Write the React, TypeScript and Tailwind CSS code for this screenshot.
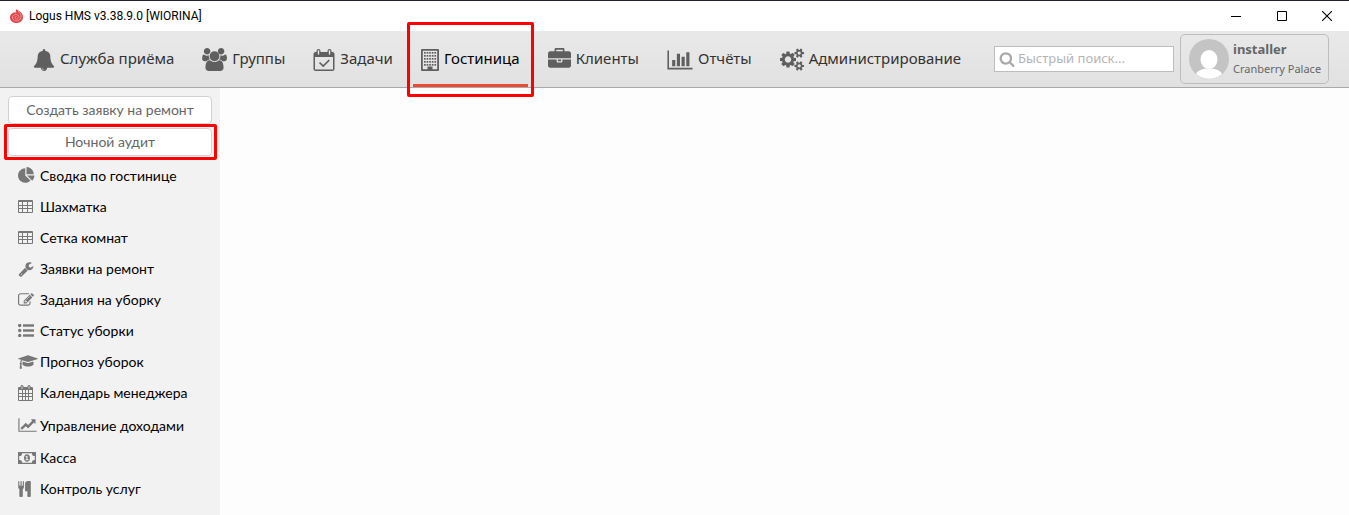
import type { ReactNode } from "react";

type IconProps = { box: string; className: string; children: ReactNode };

function Icon({ box, className, children }: IconProps) {
  return (
    <svg viewBox={box} className={className} fill="currentColor" aria-hidden="true">
      {children}
    </svg>
  );
}

const BellIcon = () => (
  <Icon box="0 0 1792 1792" className="h-[22px] w-[22px]">
    <path d="M912 1696q0-16-16-16-59 0-101.5-42.5t-42.5-101.5q0-16-16-16t-16 16q0 73 51.5 124.5t124.5 51.5q16 0 16-16zm816-288q0 52-38 90t-90 38h-448q0 106-75 181t-181 75-181-75-75-181h-448q-52 0-90-38t-38-90q50-42 91-88t85-119.5 74.5-158.5 50-206 19.5-260q0-152 117-282.5t307-158.5q-8-19-8-39 0-40 28-68t68-28 68 28 28 68q0 20-8 39 190 28 307 158.5t117 282.5q0 139 19.5 260t50 206 74.5 158.5 85 119.5 91 88z" />
  </Icon>
);

const UsersIcon = () => (
  <Icon box="-64 0 1920 1792" className="h-[23px] w-[25px]">
    <path d="M529 896q-162 5-265 128h-134q-82 0-138-40.5t-56-118.5q0-353 124-353 6 0 43.500 21t97.500 42.500 119 21.500q67 0 133-23-5 37-5 66 0 159 93 256zm1071 637q0 120-73 189.500t-194 69.500h-874q-121 0-194-69.500t-73-189.500q0-53 3.500-103.500t14-109 26.500-108.500 43-97.500 62-81 85.500-53.500 111.500-20q10 0 43 21.500t73 48 107 48 135 21.500 135-21.500 107-48 73-48 43-21.500q61 0 111.500 20t85.500 53.500 62 81 43 97.500 26.500 108.500 14 109 3.500 103.500zm-1024-1277q0 106-75 181t-181 75-181-75-75-181 75-181 181-75 181 75 75 181zm704 384q0 159-112.500 271.500t-271.500 112.500-271.500-112.500-112.500-271.500 112.500-271.500 271.500-112.500 271.500 112.500 112.500 271.500zm576 225q0 78-56 118.500t-138 40.500h-134q-103-123-265-128 93-97 93-256 0-29-5-66 66 23 133 23 59 0 119-21.500t97.500-42.500 43.500-21q124 0 124 353zm-192-609q0 106-75 181t-181 75-181-75-75-181 75-181 181-75 181 75 75 181z" />
  </Icon>
);

const CalendarCheckIcon = () => (
  <Icon box="0 0 21 22" className="h-[22px] w-[22px]">
    <path fillRule="evenodd" d="M2 3H3V2a2 2 0 0 1 4 0V3H14V2a2 2 0 0 1 4 0V3H19a2 2 0 0 1 2 2V20a2 2 0 0 1-2 2H2a2 2 0 0 1-2-2V5a2 2 0 0 1 2-2ZM1.500 8V20.500H19.500V8ZM4.300 1.800V5a.7.7 0 0 0 1.400 0V1.800a.7.7 0 0 0-1.400 0ZM15.300 1.800V5a.7.7 0 0 0 1.400 0V1.800a.7.7 0 0 0-1.400 0Z" />
    <path d="M6 13.500L9.700 17L15.800 11" fill="none" stroke="currentColor" strokeWidth="1.700" />
  </Icon>
);

const BuildingIcon = () => (
  <Icon box="0 0 18 22" className="h-[22px] w-[18px]">
    <path fillRule="evenodd" d="M1 0H17a1 1 0 0 1 1 1V21a1 1 0 0 1-1 1H1a1 1 0 0 1-1-1V1a1 1 0 0 1 1-1ZM1.800 1.800V20.200H6.500V17.500H11.500V20.200H16.200V1.800Z" />
    {[3, 6, 9, 12, 15].map((y) =>
      [3, 5.6, 8.2, 10.8, 13.4].map((x) => <rect key={`${x}-${y}`} x={x} y={y} width="1.700" height="1.700" />),
    )}
  </Icon>
);

const BriefcaseIcon = () => (
  <Icon box="0 0 1792 1792" className="h-[23px] w-[23px]">
    <path d="M640 256h512v-128h-512v128zm1152 640v480q0 66-47 113t-113 47h-1472q-66 0-113-47t-47-113v-480h672v160q0 26 19 45t45 19h320q26 0 45-19t19-45v-160h672zm-768 0v128h-256v-128h256zm768-480v384h-1792v-384q0-66 47-113t113-47h352v-160q0-40 28-68t68-28h576q40 0 68 28t28 68v160h352q66 0 113 47t47 113z" />
  </Icon>
);

const ChartIcon = () => (
  <Icon box="0 0 2048 1792" className="h-[22px] w-[26px]">
    <path d="M640 896v512h-256v-512h256zm384-512v1024h-256v-1024h256zm1024 1152v128h-2048v-1536h128v1408h1920zm-640-896v768h-256v-768h256zm384-384v1152h-256v-1152h256z" />
  </Icon>
);

const CogsIcon = () => (
  <Icon box="0 0 1920 1792" className="h-[23px] w-[24px]">
    <path d="M896 896q0-106-75-181t-181-75-181 75-75 181 75 181 181 75 181-75 75-181zm768 512q0-52-38-90t-90-38-90 38-38 90q0 53 37.500 90.500t90.500 37.500 90.500-37.500 37.500-90.500zm0-1024q0-52-38-90t-90-38-90 38-38 90q0 53 37.500 90.500t90.500 37.500 90.500-37.500 37.500-90.500zm-384 421v185q0 10-7 19.500t-16 10.500l-155 24q-11 35-32 76 34 48 90 115 7 11 7 20 0 12-7 19-23 30-82.500 89.500t-78.500 59.500q-11 0-21-7l-115-90q-37 19-77 31-11 108-23 155-7 24-30 24h-186q-11 0-20-7.500t-10-17.500l-23-153q-34-10-75-31l-118 89q-7 7-20 7-11 0-21-8-144-133-144-160 0-9 7-19 10-14 41-53t47-61q-23-44-35-82l-152-24q-10-1-17-9.500t-7-19.500v-185q0-10 7-19.500t16-10.500l155-24q11-35 32-76-34-48-90-115-7-11-7-20 0-12 7-20 22-30 82-89t79-59q11 0 21 7l115 90q34-18 77-32 11-108 23-154 7-24 30-24h186q11 0 20 7.500t10 17.500l23 153q34 10 75 31l118-89q8-7 20-7 11 0 21 8 144 133 144 160 0 8-7 19-12 16-42 54t-45 60q23 48 34 82l152 23q10 2 17 10.500t7 19.500zm640 533v140q0 16-149 31-12 27-30 52 51 113 51 138 0 4-4 7-122 71-124 71-8 0-46-47t-52-68q-20 2-30 2t-30-2q-14 21-52 68t-46 47q-2 0-124-71-4-3-4-7 0-25 51-138-18-25-30-52-149-15-149-31v-140q0-16 149-31 13-29 30-52-51-113-51-138 0-4 4-7 4-2 35-20t59-34 30-16q8 0 46 46.500t52 67.500q20-2 30-2t30 2q51-71 92-112l6-2q4 0 124 70 4 3 4 7 0 25-51 138 17 23 30 52 149 15 149 31zm0-1024v140q0 16-149 31-12 27-30 52 51 113 51 138 0 4-4 7-122 71-124 71-8 0-46-47t-52-68q-20 2-30 2t-30-2q-14 21-52 68t-46 47q-2 0-124-71-4-3-4-7 0-25 51-138-18-25-30-52-149-15-149-31v-140q0-16 149-31 13-29 30-52-51-113-51-138 0-4 4-7 4-2 35-20t59-34 30-16q8 0 46 46.500t52 67.500q20-2 30-2t30 2q51-71 92-112l6-2q4 0 124 70 4 3 4 7 0 25-51 138 17 23 30 52 149 15 149 31z" />
  </Icon>
);

const SearchIcon = () => (
  <Icon box="0 0 1792 1792" className="h-4 w-4 shrink-0">
    <path d="M1216 832q0-185-131.500-316.500t-316.500-131.500-316.500 131.500-131.500 316.500 131.500 316.500 316.500 131.500 316.500-131.500 131.500-316.500zm512 832q0 52-38 90t-90 38q-54 0-90-38l-343-342q-179 124-399 124-143 0-273.500-55.500t-225-150-150-225-55.500-273.500 55.500-273.500 150-225 225-150 273.500-55.500 273.500 55.500 225 150 150 225 55.500 273.500q0 220-124 399l343 343q37 37 37 90z" />
  </Icon>
);

const PieIcon = () => (
  <Icon box="0 0 1792 1792" className="h-[17px] w-[17px]">
    <path d="M768 890l546 546q-106 108-247.500 168t-298.500 60q-209 0-385.500-103t-279.500-279.500-103-385.500 103-385.500 279.500-279.500 385.500-103v762zm187 6h773q0 157-60 298.500t-168 247.500zm709-128h-768v-768q209 0 385.500 103t279.500 279.500 103 385.500z" />
  </Icon>
);

const TableIcon = () => (
  <Icon box="0 0 15 13" className="h-[13px] w-[15px]">
    <path fillRule="evenodd" d="M1 0H14a1 1 0 0 1 1 1V12a1 1 0 0 1-1 1H1a1 1 0 0 1-1-1V1a1 1 0 0 1 1-1ZM1 2V5H4V2ZM5 2V5H9V2ZM10 2V5H14V2ZM1 6V8H4V6ZM5 6V8H9V6ZM10 6V8H14V6ZM1 9V12H4V9ZM5 9V12H9V9ZM10 9V12H14V9Z" />
  </Icon>
);

const WrenchIcon = () => (
  <Icon box="0 0 1792 1792" className="h-4 w-4">
    <path d="M448 1472q0-26-19-45t-45-19-45 19-19 45 19 45 45 19 45-19 19-45zm644-420l-682 682q-37 37-90 37-52 0-91-37l-106-108q-38-36-38-90 0-53 38-91l681-681q39 98 114.500 173.500t173.500 114.500zm634-435q0 39-23 106-47 134-164.500 217.500t-258.500 83.500q-185 0-316.500-131.500t-131.500-316.500 131.500-316.500 316.500-131.500q58 0 121.500 16.500t107.500 46.500q16 11 16 28t-16 28l-293 169v224l193 107q5-3 79-48.500t135.500-81 70.500-35.500q15 0 23.500 10t8.500 25z" />
  </Icon>
);

const EditIcon = () => (
  <Icon box="0 0 1792 1792" className="h-4 w-4">
    <path d="M888 1184l116-116-152-152-116 116v56h96v96h56zm440-720q-16-16-33 1l-350 350q-17 17-1 33t33-1l350-350q17-17 1-33zm80 594v190q0 119-84.500 203.500t-203.500 84.500h-832q-119 0-203.500-84.500t-84.500-203.500v-832q0-119 84.500-203.500t203.500-84.500h832q63 0 117 25 15 7 18 23 3 17-9 29l-49 49q-14 14-32 8-23-6-45-6h-832q-66 0-113 47t-47 113v832q0 66 47 113t113 47h832q66 0 113-47t47-113v-126q0-13 9-22l64-64q15-15 35-7t20 29zm-96-738l288 288-672 672h-288v-288zm444 132l-92 92-288-288 92-92q28-28 68-28t68 28l152 152q28 28 28 68t-28 68z" />
  </Icon>
);

const ListIcon = () => (
  <Icon box="0 0 16 13" className="h-[13px] w-4">
    {[1.5, 6.5, 11.5].map((y) => (
      <g key={y}>
        <circle cx="1.700" cy={y} r="1.700" />
        <rect x="5" y={y - 1.2} width="11" height="2.400" />
      </g>
    ))}
  </Icon>
);

const CapIcon = () => (
  <Icon box="0 0 2304 1792" className="h-4 w-5">
    <path d="M1774 836l18 316q4 69-82 128t-235 93.500-323 34.500-323-34.500-235-93.500-82-128l18-316 574 181q22 7 48 7t48-7zm530-324q0 23-22 31l-1120 352q-4 1-10 1t-10-1l-652-206q-43 34-71 111.500t-34 178.500q63 36 63 109 0 69-58 107l58 433q2 14-8 25-9 11-24 11h-192q-15 0-24-11-10-11-8-25l58-433q-58-38-58-107 0-73 65-111 11-207 98-330l-333-104q-22-8-22-31t22-31l1120-352q4-1 10-1t10 1l1120 352q22 8 22 31z" />
  </Icon>
);

const CalendarIcon = () => (
  <Icon box="0 0 15 16" className="h-4 w-[15px]">
    <path fillRule="evenodd" d="M1 2H2.500V1.500a1.500 1.500 0 0 1 3 0V2H9.500V1.500a1.500 1.500 0 0 1 3 0V2H14a1 1 0 0 1 1 1V15a1 1 0 0 1-1 1H1a1 1 0 0 1-1-1V3a1 1 0 0 1 1-1ZM1 5V8H4V5ZM5 5V8H7V5ZM8 5V8H10V5ZM11 5V8H14V5ZM1 9V11H4V9ZM5 9V11H7V9ZM8 9V11H10V9ZM11 9V11H14V9ZM1 12V15H4V12ZM5 12V15H7V12ZM8 12V15H10V12ZM11 12V15H14V12ZM3.600 1.500V3.800H4.400V1.500ZM10.600 1.500V3.800H11.400V1.500Z" />
  </Icon>
);

const LineChartIcon = () => (
  <Icon box="0 0 2048 1792" className="h-4 w-[19px]">
    <path d="M2048 1536v128h-2048v-1536h128v1408h1920zm-128-1248v435q0 21-19.500 29.500t-35.500-7.500l-121-121-633 633q-10 10-23 10t-23-10l-233-233-416 416-192-192 585-585q10-10 23-10t23 10l233 233 464-464-121-121q-16-16-7.500-35.500t29.500-19.500h435q14 0 23 9t9 23z" />
  </Icon>
);

const MoneyIcon = () => (
  <Icon box="0 0 18 12" className="h-3 w-[18px]">
    <path fillRule="evenodd" d="M.5 0H17.500a.5.500 0 0 1 .5.500V11.500a.5.500 0 0 1-.5.500H.5a.5.500 0 0 1-.5-.5V.5A.5.500 0 0 1 .5 0ZM4 1.200A2.600 2.600 0 0 1 1.200 4V8A2.600 2.600 0 0 1 4 10.800H14A2.600 2.600 0 0 1 16.800 8V4A2.600 2.600 0 0 1 14 1.200Z" />
    <path fillRule="evenodd" d="M9 2.200C10.800 2.200 12 3.800 12 6S10.800 9.800 9 9.800 6 8.200 6 6 7.200 2.200 9 2.200ZM8.700 3.800L7.500 4.800 8 5.500 8.500 5.200V7.200H7.600V8.200H10.400V7.200H9.500V3.800Z" />
  </Icon>
);

const CutleryIcon = () => (
  <Icon box="192 0 1408 1792" className="h-4 w-[13px]">
    <path d="M832 64v640q0 61-35.500 111t-92.500 70v779q0 52-38 90t-90 38h-128q-52 0-90-38t-38-90v-779q-57-20-92.500-70t-35.500-111v-640q0-26 19-45t45-19 45 19 19 45v416q0 26 19 45t45 19 45-19 19-45v-416q0-26 19-45t45-19 45 19 19 45v416q0 26 19 45t45 19 45-19 19-45v-416q0-26 19-45t45-19 45 19 19 45zm768 0v1600q0 52-38 90t-90 38h-128q-52 0-90-38t-38-90v-512h-224q-13 0-22.500-9.500t-9.500-22.500v-800q0-132 94-226t226-94h256q26 0 45 19t19 45z" />
  </Icon>
);

const LogoIcon = () => (
  <svg viewBox="0 0 26 28" className="h-[14px] w-[13px]" aria-hidden="true">
    <path fill="#e0474b" d="M13 7C10 4 12 1 14 0c0 2 2 3 4 4 4 2 8 6 8 12 0 7-5 12-13 12C5 28 0 23 0 17 0 11 5 7 10 7Z" />
    <path d="M16 5c5 3 7 7 6 12-1 4-5 7-9 7-5 0-8-3-8-7s3-6 7-6 6 3 6 5-2 4-5 4-3-2-3-3 1-2 3-2" fill="none" stroke="#f6b3b3" strokeWidth="1.400" />
  </svg>
);

const HIGHLIGHT = "pointer-events-none absolute z-10 rounded-xs border-3 border-[#ff0000]";

const tabs = [
  { label: "Служба приёма", icon: <BellIcon /> },
  { label: "Группы", icon: <UsersIcon /> },
  { label: "Задачи", icon: <CalendarCheckIcon /> },
  { label: "Гостиница", icon: <BuildingIcon />, active: true },
  { label: "Клиенты", icon: <BriefcaseIcon /> },
  { label: "Отчёты", icon: <ChartIcon /> },
  { label: "Администрирование", icon: <CogsIcon /> },
];

const links = [
  { label: "Сводка по гостинице", icon: <PieIcon /> },
  { label: "Шахматка", icon: <TableIcon /> },
  { label: "Сетка комнат", icon: <TableIcon /> },
  { label: "Заявки на ремонт", icon: <WrenchIcon /> },
  { label: "Задания на уборку", icon: <EditIcon /> },
  { label: "Статус уборки", icon: <ListIcon /> },
  { label: "Прогноз уборок", icon: <CapIcon /> },
  { label: "Календарь менеджера", icon: <CalendarIcon /> },
  { label: "Управление доходами", icon: <LineChartIcon />, tall: true },
  { label: "Касса", icon: <MoneyIcon /> },
  { label: "Контроль услуг", icon: <CutleryIcon /> },
];

function TitleBar() {
  return (
    <div className="flex h-[31px] items-center border-t border-[#25222e] bg-white pl-[10px]">
      <LogoIcon />
      <span className="ml-[6px] font-['Roboto',sans-serif] text-[12px] text-black">Logus HMS v3.38.9.0 [WIORINA]</span>
      <div className="ml-auto flex text-black">
        <button aria-label="Свернуть" className="flex h-[30px] w-[46px] items-center justify-center">
          <svg viewBox="0 0 10 10" className="h-[10px] w-[10px]"><path d="M0 5.500H10" stroke="currentColor" /></svg>
        </button>
        <button aria-label="Развернуть" className="flex h-[30px] w-[46px] items-center justify-center">
          <svg viewBox="0 0 10 10" className="h-[10px] w-[10px]"><path d="M.5.500H9.500V9.500H.5Z" fill="none" stroke="currentColor" /></svg>
        </button>
        <button aria-label="Закрыть" className="flex h-[30px] w-11 items-center justify-center">
          <svg viewBox="0 0 10 10" className="h-[10px] w-[10px]"><path d="M0 0L10 10M10 0L0 10" stroke="currentColor" strokeWidth="1.100" /></svg>
        </button>
      </div>
    </div>
  );
}

function Header() {
  return (
    <header className="flex h-[57px] border-b border-[#a9a9a9] bg-linear-to-b from-[#e9e9e9] to-[#e1e1e1] pr-5 pl-[25px]">
      <nav className="flex gap-3">
        {tabs.map((tab) => (
          <a
            key={tab.label}
            href="#"
            className={
              tab.active
                ? "relative flex items-center gap-[5px] border-b-3 border-[#e94b35] px-2 pt-1 text-[15px] whitespace-nowrap text-black"
                : "flex items-center gap-[5px] border-b-3 border-transparent px-2 pt-1 text-[15px] whitespace-nowrap text-[#333]"
            }
          >
            <span className="text-[#5f5f5f]">{tab.icon}</span>
            <span className="pb-[3px]">{tab.label}</span>
            {tab.active && <span className={`${HIGHLIGHT} -inset-x-[6px] -top-[9px] -bottom-[13px]`} />}
          </a>
        ))}
      </nav>
      <div className="ml-auto flex items-center gap-[6px]">
        <label className="flex h-[26px] w-[180px] items-center gap-[3px] border border-[#bdbdbd] bg-white pl-1 text-[#a9a9a9]">
          <SearchIcon />
          <input
            type="text"
            aria-label="Быстрый поиск"
            placeholder="Быстрый поиск..."
            className="w-full min-w-0 bg-transparent text-[13px] text-[#333] outline-none placeholder:text-[#b4b4b4]"
          />
        </label>
        <button className="flex h-[50px] w-[149px] items-center gap-1 rounded-[5px] border border-[#bdbdbd] pl-2 text-left text-[#666]">
          <svg viewBox="0 0 40 40" className="h-10 w-10 shrink-0" aria-hidden="true">
            <circle cx="20" cy="20" r="20" fill="#c4c4c4" />
            <ellipse cx="20" cy="20.500" rx="8.500" ry="9.500" fill="#fff" />
            <path d="M7 35C9 31 14 29.500 20 29.500S31 31 33 35A20 20 0 0 1 7 35Z" fill="#fff" />
          </svg>
          <span className="flex flex-col whitespace-nowrap">
            <span className="text-[13px] leading-5 font-bold">installer</span>
            <span className="text-[11px] leading-5">Cranberry Palace</span>
          </span>
        </button>
      </div>
    </header>
  );
}

function Sidebar() {
  return (
    <aside className="w-[220px] shrink-0 bg-[#f2f2f2] pt-2 font-['Lato','Noto_Sans',sans-serif] text-[14px]">
      <div className="flex flex-col gap-1 px-2">
        <button className="h-7 rounded-[4px] border border-[#d2d2d2] bg-white pb-0.5 text-[#666]">Создать заявку на ремонт</button>
        <div className="relative flex flex-col">
          <button className="h-7 rounded-[4px] border border-[#d2d2d2] bg-white pb-0.5 text-[#666]">Ночной аудит</button>
          <span className={`${HIGHLIGHT} -inset-y-1 -right-[5px] -left-1`} />
        </div>
      </div>
      <nav className="flex flex-col pt-1 pl-[18px]">
        {links.map((link) => (
          <a
            key={link.label}
            href="#"
            className={link.tall ? "flex h-[34px] items-center text-black" : "flex h-[31px] items-center text-black"}
          >
            <span className="w-[22px] shrink-0 text-[#777]">{link.icon}</span>
            {link.label}
          </a>
        ))}
      </nav>
    </aside>
  );
}

export default function App() {
  return (
    <div className="flex min-h-screen flex-col bg-[#fdfdfd] font-['Noto_Sans',sans-serif]">
      <TitleBar />
      <Header />
      <div className="flex grow">
        <Sidebar />
        <main className="grow" />
      </div>
    </div>
  );
}
